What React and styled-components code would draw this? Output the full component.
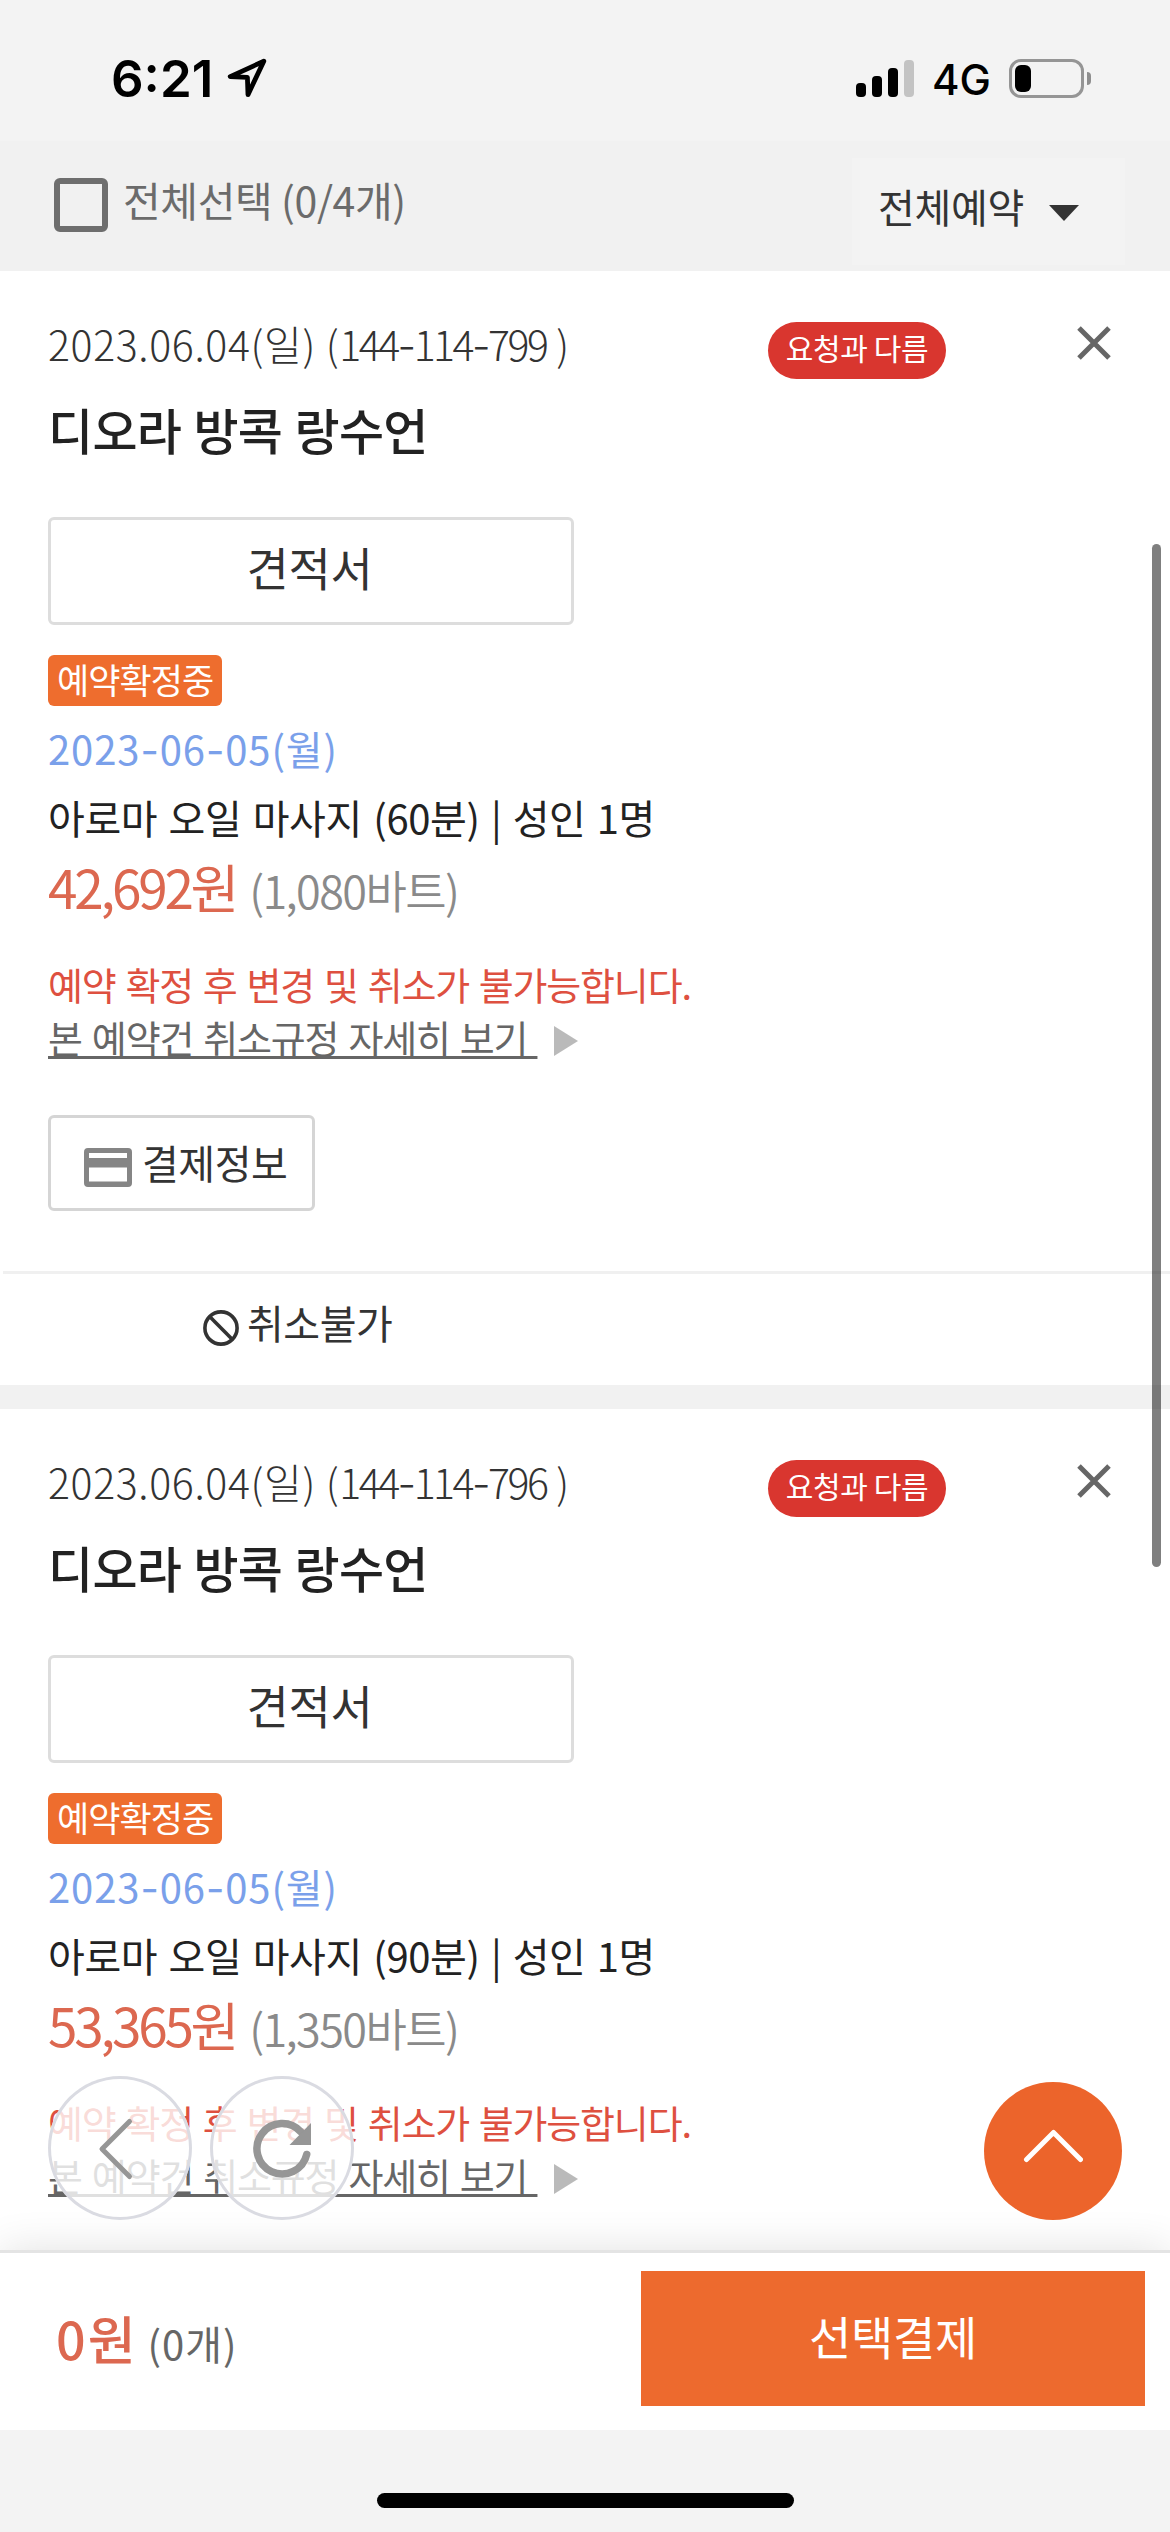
import styled, { createGlobalStyle } from "styled-components";

const bookings = [
  {
    id: "144-114-799",
    bookedAt: "2023.06.04(일)",
    title: "디오라 방콕 랑수언",
    useDate: "2023-06-05(월)",
    option: "아로마 오일 마사지 (60분) | 성인 1명",
    price: "42,692원",
    baht: "(1,080바트)",
    expanded: true,
  },
  {
    id: "144-114-796",
    bookedAt: "2023.06.04(일)",
    title: "디오라 방콕 랑수언",
    useDate: "2023-06-05(월)",
    option: "아로마 오일 마사지 (90분) | 성인 1명",
    price: "53,365원",
    baht: "(1,350바트)",
    expanded: false,
  },
];

// the Korean font's hyphen is too short next to its digits
const withDashes = (text) =>
  text
    .split(/(-)/)
    .map((part, i) => (part === "-" ? <Dash key={i}>-</Dash> : part));

const StatusBar = () => (
  <Status>
    <Clock>6:21</Clock>
    <svg width="40" height="40" viewBox="0 0 40 40">
      <path
        d="M36.8 3.2L3.2 18.6L20.4 19.4L21 36.6Z"
        fill="none"
        stroke="#000"
        strokeWidth="4.8"
        strokeLinejoin="round"
      />
    </svg>
    <StatusRight>
      <Signal>
        <Bar $h={14} />
        <Bar $h={21} />
        <Bar $h={29} />
        <Bar $h={37} $off />
      </Signal>
      <Network>4G</Network>
      <Battery>
        <BatteryBody>
          <BatteryLevel />
        </BatteryBody>
        <BatteryCap />
      </Battery>
    </StatusRight>
  </Status>
);

const BookingCard = ({ booking }) => (
  <Card>
    <CardBody>
      <CardTop>
        <BookedAt>
          {booking.bookedAt} (<Code>{withDashes(booking.id)}</Code>)
        </BookedAt>
        <Pill>요청과 다름</Pill>
        <CloseIcon width="34" height="34" viewBox="0 0 34 34">
          <path d="M2 2L32 32M32 2L2 32" stroke="#666" strokeWidth="5" />
        </CloseIcon>
      </CardTop>
      <Title>{booking.title}</Title>
      <QuoteButton>견적서</QuoteButton>
      <Badge>예약확정중</Badge>
      <UseDate>{withDashes(booking.useDate)}</UseDate>
      <Option>{booking.option}</Option>
      <PriceRow>
        <Price>{booking.price}</Price>
        <Baht>{booking.baht}</Baht>
      </PriceRow>
      <Notice>예약 확정 후 변경 및 취소가 불가능합니다.</Notice>
      <PolicyRow>
        <Policy>본 예약건 취소규정 자세히 보기&nbsp;</Policy>
        <svg width="24" height="30" viewBox="0 0 24 30">
          <path d="M0 0L24 15L0 30Z" fill="#bababa" />
        </svg>
      </PolicyRow>
      {booking.expanded && (
        <PayInfoButton>
          <PayIcon width="48" height="39" viewBox="0 0 48 39">
            <path
              fillRule="evenodd"
              fill="#858585"
              d="M4 0H44a4 4 0 0 1 4 4V35a4 4 0 0 1-4 4H4a4 4 0 0 1-4-4V4a4 4 0 0 1 4-4ZM5 5V10H43V5ZM5 19.500V33.500H43V19.500Z"
            />
          </PayIcon>
          결제정보
        </PayInfoButton>
      )}
    </CardBody>
    {booking.expanded && (
      <CardFooter>
        <BanIcon width="36" height="36" viewBox="0 0 36 36">
          <circle cx="18" cy="18" r="16.100" />
          <path d="M6.600 6.600L29.400 29.400" />
        </BanIcon>
        취소불가
      </CardFooter>
    )}
  </Card>
);

export default function App() {
  return (
    <Page>
      <GlobalStyle />
      <StatusBar />
      <Toolbar>
        <Checkbox />
        <SelectAll>전체선택 (0/4개)</SelectAll>
        <Filter>
          전체예약
          <svg width="30" height="16" viewBox="0 0 30 16">
            <path d="M0 0H30L15 16Z" fill="#333" />
          </svg>
        </Filter>
      </Toolbar>
      <List>
        {bookings.map((booking) => (
          <BookingCard key={booking.id} booking={booking} />
        ))}
      </List>
      <BottomBar>
        <Sum>
          <Total>0원</Total>
          <Count>(0개)</Count>
        </Sum>
        <PayButton>선택결제</PayButton>
      </BottomBar>
      <HomeArea>
        <HomeIndicator />
      </HomeArea>

      <ScrollThumb />
      <FloatingNav>
        <NavButton>
          <svg width="144" height="144" viewBox="0 0 144 144">
            <path
              d="M81.500 45.500L54 73L81.500 100.500"
              fill="none"
              stroke="#969696"
              strokeWidth="5"
              strokeLinecap="round"
              strokeLinejoin="round"
            />
          </svg>
        </NavButton>
        <NavButton>
          <svg width="144" height="144" viewBox="0 0 144 144">
            <path
              d="M96.700 78.500A25.200 25.200 0 1 1 91 56"
              fill="none"
              stroke="#969696"
              strokeWidth="7.500"
              strokeLinecap="round"
            />
            <path d="M101 47V69H79.500Z" fill="#969696" />
          </svg>
        </NavButton>
      </FloatingNav>
      <TopButton>
        <svg width="60" height="34" viewBox="0 0 60 34">
          <path
            d="M3.500 30.500L30.500 3.500L57.500 30.500"
            fill="none"
            stroke="#fff"
            strokeWidth="5"
            strokeLinecap="round"
            strokeLinejoin="round"
          />
        </svg>
      </TopButton>
    </Page>
  );
}

const GlobalStyle = createGlobalStyle`
  * {
    box-sizing: border-box;
  }
  body {
    margin: 0;
    background: #f3f3f3;
    font-family: "Noto Sans CJK KR", sans-serif;
  }
  svg {
    display: block;
    flex: none;
  }
`;

const Page = styled.div`
  position: relative;
  display: flex;
  flex-direction: column;
  width: 1170px;
  height: 2532px;
  overflow: hidden;
  white-space: nowrap;
`;

const Status = styled.div`
  display: flex;
  align-items: center;
  height: 141px;
  padding: 15px 79px 0 111px;
  color: #000;
  font-family: Inter, sans-serif;
  svg {
    margin-left: 14px;
  }
`;

const Clock = styled.div`
  width: 102px;
  font-size: 51px;
  font-weight: 600;
`;

const StatusRight = styled.div`
  display: flex;
  align-items: center;
  margin-left: auto;
`;

const Signal = styled.div`
  display: flex;
  align-items: flex-end;
  gap: 6px;
`;

const Bar = styled.div`
  width: 10px;
  height: ${({ $h }) => $h}px;
  border-radius: 4px;
  background: ${({ $off }) => ($off ? "#c3c3c3" : "#000")};
`;

const Network = styled.div`
  width: 77px;
  margin: 2px 0 0 18px;
  font-size: 42px;
  font-weight: 500;
`;

const Battery = styled.div`
  display: flex;
  align-items: center;
  gap: 3px;
`;

const BatteryBody = styled.div`
  width: 75px;
  height: 39px;
  padding: 3px;
  border: 3px solid #959595;
  border-radius: 12px;
`;

const BatteryLevel = styled.div`
  width: 16px;
  height: 27px;
  border-radius: 6px;
  background: #000;
`;

const BatteryCap = styled.div`
  width: 4px;
  height: 13px;
  border-radius: 0 4px 4px 0;
  background: #8e8e8e;
`;

const Toolbar = styled.div`
  display: flex;
  height: 130px;
  padding-left: 54px;
  background: #f1f1f1;
`;

const Checkbox = styled.div`
  width: 54px;
  height: 54px;
  margin-top: 37px;
  border: 6px solid #6e6e6e;
  border-radius: 6px;
`;

const SelectAll = styled.div`
  margin: 28px 0 0 15px;
  color: #6b6b6b;
  font-size: 41px;
  line-height: 60px;
  letter-spacing: -0.4px;
`;

const Filter = styled.div`
  display: flex;
  align-items: center;
  width: 273px;
  height: 107px;
  margin: 17px 45px 0 auto;
  padding: 0 0 12px 26px;
  background: #f3f3f3;
  color: #333;
  font-size: 40px;
  letter-spacing: -0.3px;
  svg {
    margin: 14px 0 0 25px;
  }
`;

const List = styled.div`
  flex: 1;
  min-height: 0;
  overflow: hidden;
  background: #f1f1f1;
`;

const Card = styled.div`
  margin-bottom: 24px;
  background: #fff;
`;

const CardBody = styled.div`
  display: flex;
  flex-direction: column;
  align-items: flex-start;
  height: 1000px;
  padding: 42px 59px 0 48px;
`;

const CardTop = styled.div`
  display: flex;
  width: 100%;
  height: 60px;
`;

const BookedAt = styled.div`
  width: 720px;
  color: #333;
  font-size: 41px;
  font-weight: 300;
  line-height: 60px;
  letter-spacing: 0.65px;
`;

const Code = styled.span`
  margin-right: 10px;
  letter-spacing: -2.5px;
`;

const Dash = styled.span`
  font-family: Inter, sans-serif;
  line-height: 1;
`;

const Pill = styled.div`
  width: 178px;
  height: 57px;
  margin-top: 9px;
  border-radius: 29px;
  background: #d9362f;
  color: #fff;
  font-size: 30px;
  line-height: 51px;
  letter-spacing: -0.4px;
  text-align: center;
`;

const CloseIcon = styled.svg`
  margin: 13px 0 0 auto;
`;

const Title = styled.div`
  margin-top: 21px;
  color: #222;
  font-size: 49px;
  font-weight: 500;
  line-height: 70px;
  letter-spacing: -0.7px;
  word-spacing: 2px;
`;

const QuoteButton = styled.div`
  width: 526px;
  height: 108px;
  margin-top: 53px;
  padding-right: 3px;
  border: 3px solid #ddd;
  border-radius: 6px;
  color: #333;
  font-size: 46px;
  line-height: 92px;
  letter-spacing: -0.3px;
  text-align: center;
`;

const Badge = styled.div`
  width: 174px;
  height: 51px;
  margin-top: 30px;
  padding-left: 9px;
  border-radius: 6px;
  background: #ee6d2e;
  color: #fff;
  font-size: 35px;
  line-height: 47px;
  letter-spacing: -0.95px;
`;

const UseDate = styled.div`
  height: 56px;
  margin-top: 14px;
  color: #7aa0ea;
  font-size: 40px;
  line-height: 56px;
  letter-spacing: 0.9px;
`;

const Option = styled.div`
  margin-top: 13px;
  color: #222;
  font-size: 40px;
  line-height: 56px;
  letter-spacing: -0.4px;
  word-spacing: 2.8px;
`;

const PriceRow = styled.div`
  display: flex;
  align-items: baseline;
  height: 70px;
  margin-top: 6px;
  line-height: 70px;
`;

const Price = styled.div`
  color: #dc6850;
  font-size: 53px;
  font-weight: 420;
  letter-spacing: -3.2px;
`;

const Baht = styled.div`
  margin-left: 13px;
  color: #8a8a8a;
  font-size: 45px;
  font-weight: 350;
  letter-spacing: -1.6px;
`;

const Notice = styled.div`
  margin-top: 35px;
  color: #de5040;
  font-size: 38px;
  line-height: 55px;
  letter-spacing: -1.2px;
  word-spacing: 2.6px;
`;

const PolicyRow = styled.div`
  display: flex;
  height: 52px;
  svg {
    margin: 15px 0 0 16px;
  }
`;

const Policy = styled.div`
  width: 490px;
  color: #666;
  font-size: 38px;
  line-height: 52px;
  letter-spacing: -1.2px;
  word-spacing: 2.8px;
  text-decoration: underline;
  text-decoration-thickness: 3px;
  text-decoration-skip-ink: none;
  text-underline-offset: 3px;
`;

const PayInfoButton = styled.div`
  display: flex;
  width: 267px;
  height: 96px;
  margin-top: 52px;
  padding-left: 33px;
  border: 3px solid #d5d5d5;
  border-radius: 6px;
  color: #333;
  font-size: 40px;
  line-height: 88px;
  letter-spacing: -0.47px;
`;

const PayIcon = styled.svg`
  margin: 30px 10px 0 0;
`;

const CardFooter = styled.div`
  display: flex;
  height: 114px;
  margin-left: 3px;
  padding-left: 200px;
  border-top: 3px solid #f0f0f0;
  color: #333;
  font-size: 40px;
  line-height: 97px;
  letter-spacing: -0.47px;
`;

const BanIcon = styled.svg`
  margin: 36px 8px 0 0;
  fill: none;
  stroke: #333;
  stroke-width: 3.6;
`;

const BottomBar = styled.div`
  position: relative;
  display: flex;
  justify-content: space-between;
  height: 180px;
  padding: 18px 25px 0 56px;
  border-top: 3px solid #e4e4e4;
  background: #fff;
  box-shadow: 0 0 40px rgba(0, 0, 0, 0.12);
`;

const Sum = styled.div`
  display: flex;
  align-items: baseline;
  height: 70px;
  margin-top: 32px;
  line-height: 70px;
`;

const Total = styled.div`
  color: #dc6850;
  font-size: 52px;
  font-weight: 500;
  letter-spacing: 2px;
`;

const Count = styled.div`
  margin-left: 10px;
  color: #666;
  font-size: 40px;
  letter-spacing: 1px;
`;

const PayButton = styled.div`
  width: 504px;
  height: 135px;
  background: #ed6a2e;
  color: #fff;
  font-size: 46px;
  line-height: 128px;
  letter-spacing: -0.3px;
  text-align: center;
`;

const HomeArea = styled.div`
  position: relative;
  display: flex;
  justify-content: center;
  height: 102px;
  padding-top: 63px;
  background: #f3f3f3;
`;

const HomeIndicator = styled.div`
  width: 417px;
  height: 15px;
  border-radius: 8px;
  background: #000;
`;

const ScrollThumb = styled.div`
  position: absolute;
  top: 544px;
  right: 9px;
  width: 9px;
  height: 1023px;
  border-radius: 5px;
  background: rgba(0, 0, 0, 0.5);
`;

const FloatingNav = styled.div`
  position: absolute;
  left: 48px;
  bottom: 312px;
  display: flex;
  gap: 18px;
`;

const NavButton = styled.div`
  width: 144px;
  height: 144px;
  border-radius: 50%;
  background: rgba(255, 255, 255, 0.8);
  box-shadow: inset 0 0 0 3px #dadbe2;
`;

const TopButton = styled.div`
  position: absolute;
  right: 48px;
  bottom: 312px;
  display: flex;
  justify-content: center;
  width: 138px;
  height: 138px;
  padding-top: 47px;
  border-radius: 50%;
  background: #ec642b;
`;
